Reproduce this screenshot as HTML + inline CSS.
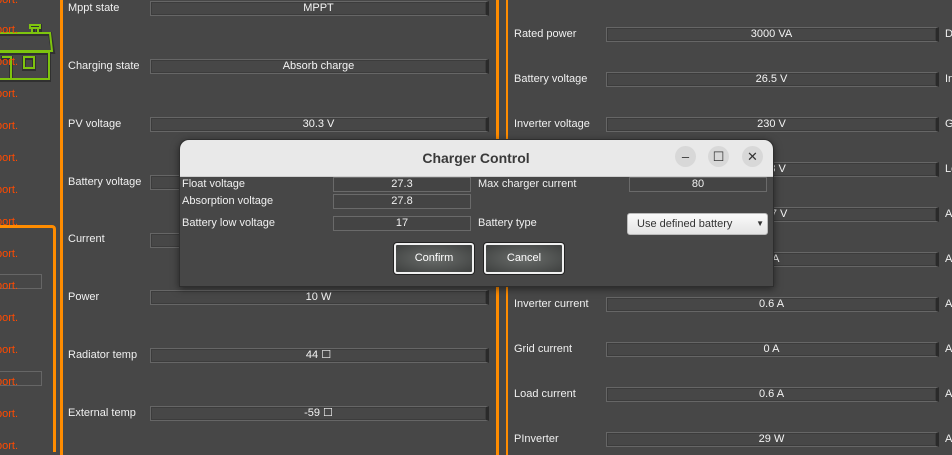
<!DOCTYPE html>
<html style="overflow:hidden;height:455px"><head><meta charset="utf-8"><style>
body{margin:0;width:952px;height:455px;background:#474747;overflow:hidden;position:relative;font-family:"Liberation Sans","DejaVu Sans",sans-serif;font-size:11px;color:#f0f0f0}
.a{position:absolute}
.lb{position:absolute;white-space:nowrap;line-height:14px}
.f{position:absolute;height:13px;border:1px solid #666;border-right:3px solid #2a2a2a;box-shadow:inset 0 0 0 1px #3c3c3c;text-align:center;line-height:13px;font-size:11px;color:#f4f4f4;white-space:nowrap;overflow:hidden}
.p{position:absolute;left:-4px;color:#ff4a00;font-size:11px;line-height:14px}
.ol{position:absolute;background:#ff8c00;width:3px}
.dl{position:absolute;white-space:nowrap;line-height:14px;font-size:11px}
.df{position:absolute;height:13px;border:1px solid #6a6a6a;text-align:center;line-height:13px;font-size:11px;background:#444}
.btn{position:absolute;top:243px;width:76px;height:27px;border:2px solid #f0f0f0;border-radius:3px;background:radial-gradient(ellipse at center,#6a6d6b 0%,#3e403f 100%);box-shadow:0 0 0 1px #222;text-align:center;line-height:27px;color:#fff;font-size:11px}
.wb{position:absolute;top:146px;width:21px;height:21px;border-radius:50%;background:#d8d8d8;color:#333;text-align:center;line-height:21px;font-size:13px}
</style></head><body>
<div class="p" style="top:-7px">port.</div>
<div class="p" style="top:87px">port.</div>
<div class="p" style="top:119px">port.</div>
<div class="p" style="top:151px">port.</div>
<div class="p" style="top:183px">port.</div>
<div class="p" style="top:215px">port.</div>
<div class="p" style="top:247px">port.</div>
<div class="a" style="left:-4px;top:274px;width:44px;height:13px;border:1px solid #666"></div>
<div class="p" style="top:279px">port.</div>
<div class="p" style="top:311px">port.</div>
<div class="p" style="top:343px">port.</div>
<div class="a" style="left:-4px;top:371px;width:44px;height:13px;border:1px solid #666"></div>
<div class="p" style="top:375px">port.</div>
<div class="p" style="top:407px">port.</div>
<div class="p" style="top:439px">port.</div>
<svg class="a" style="left:0;top:20px" width="60" height="65">
<g fill="none" stroke="#222" stroke-width="4" opacity=".6"><path d="M31 6h9v8M33 7v7M38 7v7M-2 14H50L53 32H-2M0 33H49V60H0M1 38h10v22M24 38h10v11H24z"/></g>
<g fill="none" stroke="#7ec40e" stroke-width="2"><path d="M30 5h10v3H30zM32 8v5M38 8v5M-2 13H50L52 31H-2M0 32H49V59H0M2 37h9v22M24 37h10v11H24z"/></g>
</svg>
<div class="p" style="top:23px">port.</div>
<div class="p" style="top:55px">port.</div>
<div class="a" style="left:-10px;top:225px;width:60px;height:224px;border:3px solid #ff8c00;border-bottom:none;border-radius:4px 4px 0 0"></div>
<div class="ol" style="left:60px;top:0;height:455px"></div>
<div class="ol" style="left:496px;top:0;height:455px"></div>
<div class="ol" style="left:506px;top:0;height:455px;width:2px"></div>
<div class="lb" style="left:68px;top:1px">Mppt state</div><div class="f" style="left:150px;top:1px;width:335px">MPPT</div>
<div class="lb" style="left:68px;top:59px">Charging state</div><div class="f" style="left:150px;top:59px;width:335px">Absorb charge</div>
<div class="lb" style="left:68px;top:117px">PV voltage</div><div class="f" style="left:150px;top:117px;width:335px">30.3 V</div>
<div class="lb" style="left:68px;top:175px">Battery voltage</div><div class="f" style="left:150px;top:175px;width:335px"></div>
<div class="lb" style="left:68px;top:232px">Current</div><div class="f" style="left:150px;top:233px;width:335px"></div>
<div class="lb" style="left:68px;top:290px">Power</div><div class="f" style="left:150px;top:290px;width:335px">10 W</div>
<div class="lb" style="left:68px;top:348px">Radiator temp</div><div class="f" style="left:150px;top:348px;width:335px">44 ☐</div>
<div class="lb" style="left:68px;top:406px">External temp</div><div class="f" style="left:150px;top:406px;width:335px">-59 ☐</div>
<div class="lb" style="left:514px;top:27px">Rated power</div><div class="f" style="left:606px;top:27px;width:329px">3000 VA</div><div class="lb" style="left:945px;top:27px">D</div>
<div class="lb" style="left:514px;top:72px">Battery voltage</div><div class="f" style="left:606px;top:72px;width:329px">26.5 V</div><div class="lb" style="left:945px;top:72px">In</div>
<div class="lb" style="left:514px;top:117px">Inverter voltage</div><div class="f" style="left:606px;top:117px;width:329px">230 V</div><div class="lb" style="left:945px;top:117px">G</div>
<div class="f" style="left:606px;top:162px;width:329px">228 V</div><div class="lb" style="left:945px;top:162px">Lo</div>
<div class="f" style="left:606px;top:207px;width:329px">26.7 V</div><div class="lb" style="left:945px;top:207px">A</div>
<div class="f" style="left:606px;top:252px;width:329px">0 A</div><div class="lb" style="left:945px;top:252px">A</div>
<div class="lb" style="left:514px;top:297px">Inverter current</div><div class="f" style="left:606px;top:297px;width:329px">0.6 A</div><div class="lb" style="left:945px;top:297px">A</div>
<div class="lb" style="left:514px;top:342px">Grid current</div><div class="f" style="left:606px;top:342px;width:329px">0 A</div><div class="lb" style="left:945px;top:342px">A</div>
<div class="lb" style="left:514px;top:387px">Load current</div><div class="f" style="left:606px;top:387px;width:329px">0.6 A</div><div class="lb" style="left:945px;top:387px">A</div>
<div class="lb" style="left:514px;top:432px">PInverter</div><div class="f" style="left:606px;top:432px;width:329px">29 W</div><div class="lb" style="left:945px;top:432px">A</div>
<div class="a" style="left:179px;top:139px;width:593px;height:146px;background:#474747;border:1px solid #2e2e2e;border-radius:10px 10px 0 0;box-shadow:0 2px 8px rgba(0,0,0,.5);overflow:hidden">
<div class="a" style="left:0;top:0;width:593px;height:36px;background:#e9e9e9;border-bottom:1px solid #cfcfcf"></div>
</div>
<div class="a" style="left:180px;top:148px;width:592px;text-align:center;font-weight:bold;font-size:14px;color:#3a3a3a;line-height:20px">Charger Control</div>
<div class="wb" style="left:675px">–</div>
<div class="wb" style="left:708px">☐</div>
<div class="wb" style="left:742px">✕</div>
<div class="dl" style="left:182px;top:177px">Float voltage</div><div class="df" style="left:333px;top:177px;width:136px">27.3</div>
<div class="dl" style="left:478px;top:177px">Max charger current</div><div class="df" style="left:629px;top:177px;width:136px">80</div>
<div class="dl" style="left:182px;top:194px">Absorption voltage</div><div class="df" style="left:333px;top:194px;width:136px">27.8</div>
<div class="dl" style="left:182px;top:216px">Battery low voltage</div><div class="df" style="left:333px;top:216px;width:136px">17</div>
<div class="dl" style="left:478px;top:216px">Battery type</div>
<div class="a" style="left:627px;top:213px;width:139px;height:20px;border-radius:3px;background:linear-gradient(#fafafa,#e4e4e4);border:1px solid #bbb;color:#333;line-height:20px;font-size:11px"><span style="margin-left:9px">Use defined battery</span><span style="position:absolute;right:3px;font-size:8px">▼</span></div>
<div class="btn" style="left:394px">Confirm</div>
<div class="btn" style="left:484px">Cancel</div>
</body></html>
